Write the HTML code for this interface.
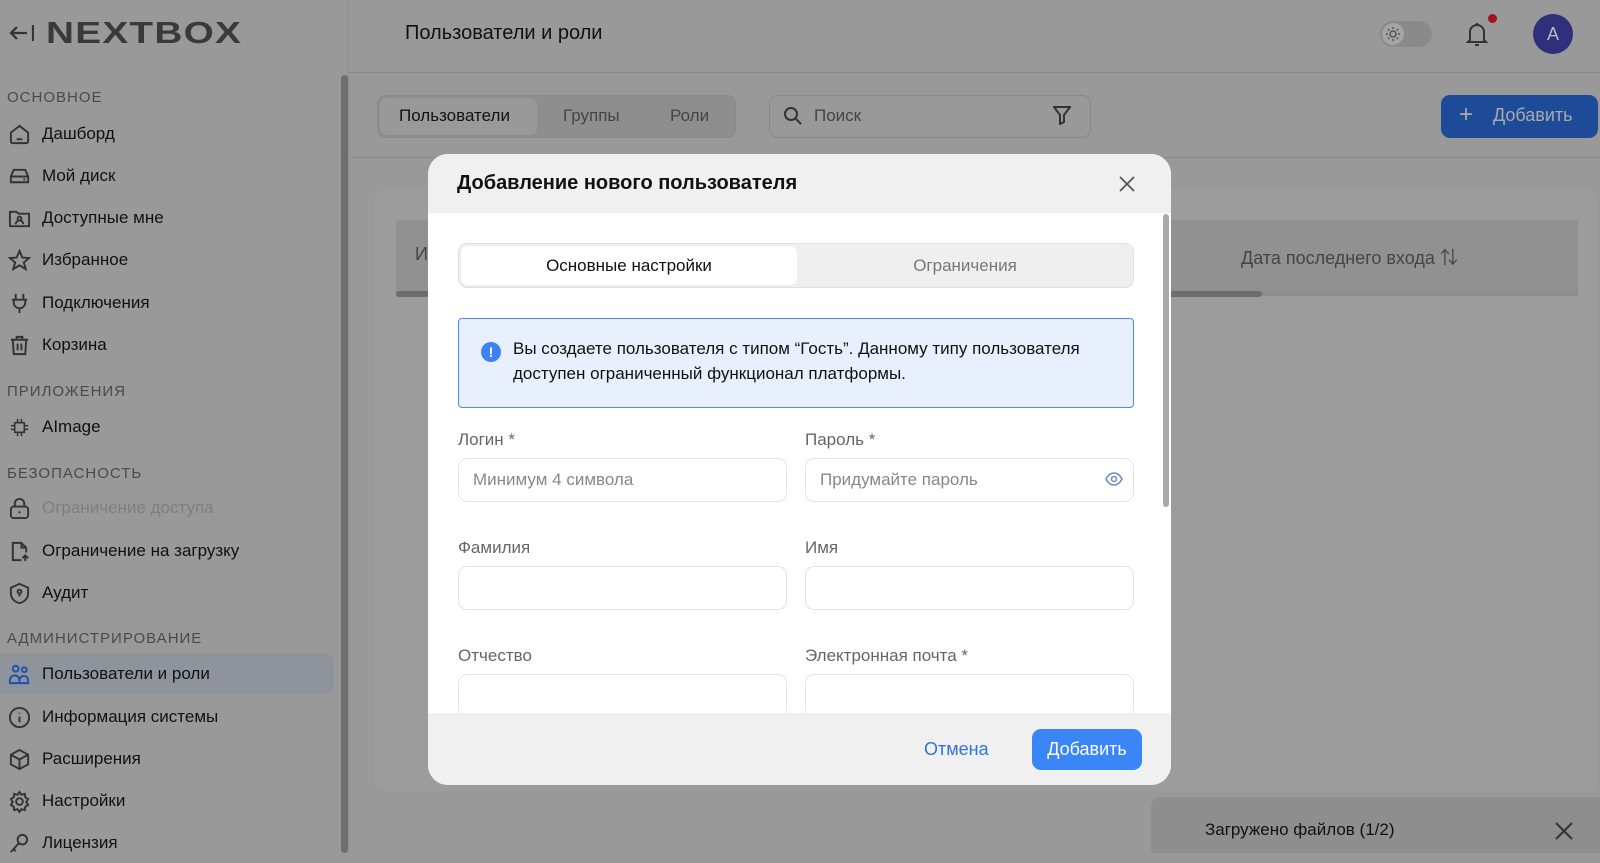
<!DOCTYPE html>
<html><head><meta charset="utf-8"><style>
*{box-sizing:border-box;margin:0;padding:0}
body{width:1600px;height:853px;overflow:hidden;background:#999;font-family:"Liberation Sans","Noto Sans CJK SC",sans-serif;position:relative;color:#111}
.abs{position:absolute}
.side{left:0;top:0;width:349px;height:853px;background:#999;border-right:1px solid #8e8e8e}
.sec{position:absolute;left:7px;font-size:15px;letter-spacing:1px;color:#4a4a4a}
.it{position:absolute;left:0;width:334px;height:40px;display:flex;align-items:center;font-size:17px;color:#111}
.it svg{position:absolute;left:8px;width:23px;height:23px}
.it span{position:absolute;left:42px}
.hdr{left:350px;top:0;right:0;height:73px;border-bottom:1px solid #8a8a8a}
.bar2{left:350px;top:73px;right:0;height:85px;border-bottom:1px solid #8a8a8a}
.modal{left:428px;top:154px;width:743px;height:631px;background:#fff;border-radius:20px;overflow:hidden}
.mh{position:absolute;left:0;top:0;right:0;height:59px;background:#f0f0f0}
.mf{position:absolute;left:0;bottom:0;right:0;height:72px;background:#f0f0f0}
.lbl{position:absolute;font-size:17px;color:#666}
.inp{position:absolute;height:44px;width:329px;border:1.5px solid #e3e3e3;border-radius:9px;background:#fff;font-size:17px;color:#888;padding:11px 0 0 14px}
</style></head><body>

<div class="abs side">
  <svg class="abs" style="left:8px;top:22px" width="26" height="22" viewBox="0 0 26 22"><path d="M3 11h16M9 5l-6 6 6 6M25 3v16" stroke="#333" stroke-width="2.2" fill="none"/></svg>
  <div class="abs" style="left:46px;top:15px;font-size:31px;font-weight:bold;color:#3a3a3a;letter-spacing:1px;transform:scaleX(1.25);transform-origin:left">NEXTBOX</div>
  <div class="abs" style="left:341px;top:75px;width:7px;height:778px;background:#6e6e6e;border-radius:4px"></div>
  <div class="sec" style="top:89px">ОСНОВНОЕ</div>
  <div class="it" style="top:114px"><svg viewBox="0 0 24 24" fill="none" stroke="#333" stroke-width="2"><path d="M3 10l9-7 9 7v9a2 2 0 0 1-2 2H5a2 2 0 0 1-2-2z"/><path d="M9 17h6"/></svg><span>Дашборд</span></div>
  <div class="it" style="top:156px"><svg viewBox="0 0 24 24" fill="none" stroke="#333" stroke-width="2"><path d="M3 12l3-7h12l3 7v6H3z M3 12h18"/><path d="M16 15h2"/></svg><span>Мой диск</span></div>
  <div class="it" style="top:198px"><svg viewBox="0 0 24 24" fill="none" stroke="#333" stroke-width="2"><path d="M2 5h7l2 2h11v13H2z"/><circle cx="12" cy="12" r="2"/><path d="M8 18a4 4 0 0 1 8 0"/></svg><span>Доступные мне</span></div>
  <div class="it" style="top:240px"><svg viewBox="0 0 24 24" fill="none" stroke="#333" stroke-width="2"><path d="M12 2l3 7 7 .5-5.5 4.5 2 7L12 17l-6.5 4 2-7L2 9.5 9 9z"/></svg><span>Избранное</span></div>
  <div class="it" style="top:283px"><svg viewBox="0 0 24 24" fill="none" stroke="#333" stroke-width="2"><path d="M8 2v5M16 2v5M4 8h16M6 8v3a6 6 0 0 0 12 0V8M12 17v5"/></svg><span>Подключения</span></div>
  <div class="it" style="top:325px"><svg viewBox="0 0 24 24" fill="none" stroke="#333" stroke-width="2"><path d="M3 6h18M9 6V3h6v3M5 6l1 15h12l1-15M10 10v7M14 10v7"/></svg><span>Корзина</span></div>
  <div class="sec" style="top:383px">ПРИЛОЖЕНИЯ</div>
  <div class="it" style="top:407px"><svg viewBox="0 0 24 24" fill="none" stroke="#333" stroke-width="1.6"><rect x="7" y="7" width="10" height="10"/><path d="M10 3v4M14 3v4M10 17v4M14 17v4M3 10h4M3 14h4M17 10h4M17 14h4"/></svg><span>AImage</span></div>
  <div class="sec" style="top:465px">БЕЗОПАСНОСТЬ</div>
  <div class="it" style="top:488px"><svg viewBox="0 0 24 24" fill="none" stroke="#333" stroke-width="2"><rect x="3" y="10" width="18" height="12" rx="3"/><path d="M7 10V7a5 5 0 0 1 10 0v3M12 15v2"/></svg><span style="color:#7e7e7e">Ограничение доступа</span></div>
  <div class="it" style="top:531px"><svg viewBox="0 0 24 24" fill="none" stroke="#333" stroke-width="2"><path d="M14 21H5V3h9l5 5v5M14 3v5h5M18 16v6M15 19l3-3 3 3"/></svg><span>Ограничение на загрузку</span></div>
  <div class="it" style="top:573px"><svg viewBox="0 0 24 24" fill="none" stroke="#333" stroke-width="2"><path d="M12 2l9 4v6c0 5-4 9-9 10-5-1-9-5-9-10V6z"/><circle cx="12" cy="10" r="2"/><path d="M12 12v3"/></svg><span>Аудит</span></div>
  <div class="sec" style="top:630px">АДМИНИСТРИРОВАНИЕ</div>
  <div class="it" style="top:654px;background:#8e939c;border-radius:0 9px 9px 0"><svg viewBox="0 0 24 24" fill="none" stroke="#1d4fb0" stroke-width="2"><circle cx="8" cy="6" r="3"/><circle cx="17" cy="7" r="2.5"/><path d="M2 21v-3a5 5 0 0 1 10 0v3zM12 21v-3a4.5 4.5 0 0 1 9 0v3h-9"/></svg><span>Пользователи и роли</span></div>
  <div class="it" style="top:697px"><svg viewBox="0 0 24 24" fill="none" stroke="#333" stroke-width="2"><circle cx="12" cy="12" r="10"/><path d="M12 11v6M12 7v1"/></svg><span>Информация системы</span></div>
  <div class="it" style="top:739px"><svg viewBox="0 0 24 24" fill="none" stroke="#333" stroke-width="2"><path d="M12 2l9 5v10l-9 5-9-5V7zM3 7l9 5 9-5M12 12v10"/></svg><span>Расширения</span></div>
  <div class="it" style="top:781px"><svg viewBox="0 0 24 24" fill="none" stroke="#333" stroke-width="2"><circle cx="12" cy="12" r="3.5"/><path d="M12 2l2 3 3.5-1 .5 3.5 3 2-2 3 2 3-3 2-.5 3.5-3.5-1-2 3-2-3-3.5 1-.5-3.5-3-2 2-3-2-3 3-2 .5-3.5 3.5 1z"/></svg><span>Настройки</span></div>
  <div class="it" style="top:823px"><svg viewBox="0 0 24 24" fill="none" stroke="#333" stroke-width="2"><circle cx="15" cy="8" r="5"/><path d="M11 12l-8 9M6 18l2 2"/></svg><span>Лицензия</span></div>
</div>

<div class="abs hdr">
  <div class="abs" style="left:55px;top:22px;font-size:20px;color:#111">Пользователи и роли</div>
  <div class="abs" style="left:1030px;top:21px;width:52px;height:26px;border-radius:13px;background:#8a8a8a"></div>
  <div class="abs" style="left:1032px;top:23px;width:22px;height:22px;border-radius:11px;background:#a4a4a4"></div>
  <svg class="abs" style="left:1035px;top:26px" width="16" height="16" viewBox="0 0 16 16" fill="none" stroke="#444" stroke-width="1.2"><circle cx="8" cy="8" r="3"/><path d="M8 1v2M8 13v2M1 8h2M13 8h2M3 3l1.4 1.4M11.6 11.6L13 13M3 13l1.4-1.4M11.6 4.4L13 3"/></svg>
  <svg class="abs" style="left:1115px;top:21px" width="24" height="26" viewBox="0 0 24 26" fill="none" stroke="#333" stroke-width="2"><path d="M5 19V11a7 7 0 0 1 14 0v8l2 2H3zM10 24h4M12 2v2"/></svg>
  <div class="abs" style="left:1138px;top:14px;width:9px;height:9px;border-radius:5px;background:#a0131c"></div>
  <div class="abs" style="left:1183px;top:14px;width:40px;height:40px;border-radius:20px;background:#2f2f7c;color:#bbb;font-size:18px;text-align:center;line-height:40px">A</div>
</div>

<div class="abs bar2">
  <div class="abs" style="left:27px;top:22px;width:359px;height:43px;border:1px solid #888;border-radius:9px;background:#8e8e8e"></div>
  <div class="abs" style="left:30px;top:25px;width:157px;height:37px;border-radius:7px;background:#999"></div>
  <div class="abs" style="left:49px;top:33px;font-size:17px;color:#111">Пользователи</div>
  <div class="abs" style="left:213px;top:33px;font-size:17px;color:#444">Группы</div>
  <div class="abs" style="left:320px;top:33px;font-size:17px;color:#444">Роли</div>
  <div class="abs" style="left:419px;top:22px;width:322px;height:43px;border:1px solid #888;border-radius:9px"></div>
  <svg class="abs" style="left:433px;top:33px" width="20" height="20" viewBox="0 0 20 20" fill="none" stroke="#333" stroke-width="2"><circle cx="8" cy="8" r="6"/><path d="M12.5 12.5L18 18"/></svg>
  <div class="abs" style="left:464px;top:33px;font-size:17px;color:#444">Поиск</div>
  <svg class="abs" style="left:703px;top:32px" width="18" height="20" viewBox="0 0 18 20" fill="none" stroke="#333" stroke-width="2"><path d="M1 2h16l-6 8v7l-4 2v-9z"/></svg>
  <div class="abs" style="left:1091px;top:22px;width:157px;height:43px;border-radius:9px;background:#1e4b97"></div>
  <div class="abs" style="left:1109px;top:28px;font-size:24px;color:#aaa">+</div>
  <div class="abs" style="left:1143px;top:32px;font-size:18px;color:#aaa">Добавить</div>
</div>

<div class="abs" style="left:375px;top:189px;width:1222px;height:602px;background:#9c9c9c;border-radius:10px"></div>
<div class="abs" style="left:396px;top:220px;width:1182px;height:71px;background:#919191"></div>
<div class="abs" style="left:396px;top:291px;width:1182px;height:5px;background:#8c8c8c"></div>
<div class="abs" style="left:396px;top:291px;width:866px;height:6px;background:#6e6e6e;border-radius:3px"></div>
<div class="abs" style="left:415px;top:244px;font-size:18px;color:#444">И</div>
<div class="abs" style="left:1241px;top:244px;font-size:18px;color:#444">Дата последнего входа ⇅</div>

<div class="abs" style="left:1151px;top:797px;width:449px;height:56px;background:#8e8e8e;border-radius:10px 0 0 0"></div>
<div class="abs" style="left:1205px;top:820px;font-size:17px;color:#111">Загружено файлов (1/2)</div>
<svg class="abs" style="left:1555px;top:822px" width="18" height="18" viewBox="0 0 18 18" stroke="#333" stroke-width="2"><path d="M1 1l16 16M17 1L1 17"/></svg>

<div class="abs modal">
  <div class="mh"></div>
  <div style="position:absolute;left:29px;top:18px;font-size:20px;font-weight:bold;color:#111">Добавление нового пользователя</div>
  <svg style="position:absolute;left:691px;top:22px" width="16" height="16" viewBox="0 0 16 16" stroke="#555" stroke-width="1.8"><path d="M1 1l14 14M15 1L1 15"/></svg>
  <div style="position:absolute;right:2px;top:60px;width:6px;height:293px;background:#aaa;border-radius:3px"></div>
  <div style="position:absolute;left:30px;top:89px;width:676px;height:45px;background:#efefef;border:1.5px solid #e0e0e0;border-radius:9px"></div>
  <div style="position:absolute;left:33px;top:92px;width:336px;height:39px;background:#fff;border-radius:7px"></div>
  <div style="position:absolute;left:33px;top:102px;width:336px;text-align:center;font-size:17px;color:#111">Основные настройки</div>
  <div style="position:absolute;left:369px;top:102px;width:336px;text-align:center;font-size:17px;color:#777">Ограничения</div>
  <div style="position:absolute;left:30px;top:164px;width:676px;height:90px;background:#e9f0fd;border:1.5px solid #4a8af2;border-radius:4px"></div>
  <div style="position:absolute;left:53px;top:188px;width:20px;height:20px;border-radius:10px;background:#3a82f6;color:#fff;font-size:14px;font-weight:bold;text-align:center;line-height:20px">!</div>
  <div style="position:absolute;left:85px;top:182px;width:600px;font-size:17px;line-height:25px;color:#111">Вы создаете пользователя с типом “Гость”. Данному типу пользователя доступен ограниченный функционал платформы.</div>
  <div class="lbl" style="left:30px;top:276px">Логин *</div>
  <div class="lbl" style="left:377px;top:276px">Пароль *</div>
  <div class="inp" style="left:30px;top:304px">Минимум 4 символа</div>
  <div class="inp" style="left:377px;top:304px">Придумайте пароль</div>
  <svg style="position:absolute;left:677px;top:318px" width="18" height="14" viewBox="0 0 18 14" fill="none" stroke="#6b8bc4" stroke-width="1.5"><path d="M1 7c2-4 5-6 8-6s6 2 8 6c-2 4-5 6-8 6s-6-2-8-6z"/><circle cx="9" cy="7" r="2.5"/></svg>
  <div class="lbl" style="left:30px;top:384px">Фамилия</div>
  <div class="lbl" style="left:377px;top:384px">Имя</div>
  <div class="inp" style="left:30px;top:412px"></div>
  <div class="inp" style="left:377px;top:412px"></div>
  <div class="lbl" style="left:30px;top:492px">Отчество</div>
  <div class="lbl" style="left:377px;top:492px">Электронная почта *</div>
  <div class="inp" style="left:30px;top:520px"></div>
  <div class="inp" style="left:377px;top:520px"></div>
  <div class="mf"></div>
  <div style="position:absolute;left:496px;top:585px;font-size:18px;color:#2f74e0">Отмена</div>
  <div style="position:absolute;left:604px;top:575px;width:110px;height:41px;border-radius:9px;background:#3a86f7;color:#fff;font-size:18px;text-align:center;line-height:41px">Добавить</div>
</div>
</body></html>
